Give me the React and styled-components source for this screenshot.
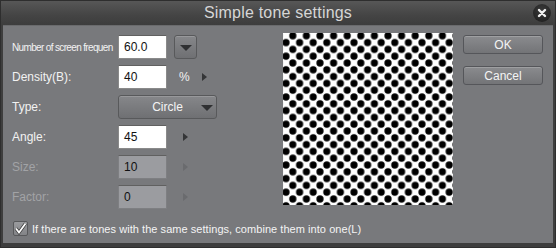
import React from 'react';
import styled, { createGlobalStyle } from 'styled-components';

const GlobalStyle = createGlobalStyle`
  html, body {
    margin: 0;
    padding: 0;
    background: #3c3c3c;
  }
  body {
    font-family: "Liberation Sans", Arial, sans-serif;
  }
`;

const Window = styled.div`
  width: 556px;
  height: 248px;
  box-sizing: border-box;
  display: flex;
  flex-direction: column;
  background: #3e3e3e;
  border: 1px solid #2e2e2e;
  overflow: hidden;
`;

const TitleBar = styled.div`
  height: 24px;
  flex-shrink: 0;
  position: relative;
  display: flex;
  align-items: center;
  justify-content: center;
  background: linear-gradient(#575757, #444444 60%, #3d3d3d);
  color: #d6d6d6;
  font-size: 16px;
  letter-spacing: 0.2px;
`;

const CloseButton = styled.div`
  position: absolute;
  right: 4px;
  top: 3px;
  width: 18px;
  height: 18px;
  border-radius: 50%;
  background: radial-gradient(circle at 50% 35%, #3a3a3a, #1c1c1c);
  display: flex;
  align-items: center;
  justify-content: center;
`;

const Body = styled.div`
  flex: 1;
  margin: 0 2px 4px 2px;
  background: #78797c;
  border-top: 1px solid #6a6b6d;
  padding: 7px 10px 0 9px;
  display: flex;
  flex-direction: column;
`;

const Content = styled.div`
  display: flex;
  align-items: flex-start;
`;

const Form = styled.div`
  width: 271px;
  margin-top: 2px;
  display: flex;
  flex-direction: column;
  gap: 6px;
`;

const Row = styled.div`
  height: 24px;
  display: flex;
  align-items: center;
`;

const Label = styled.div`
  width: 106px;
  flex-shrink: 0;
  font-size: ${p => (p.$small ? '10px' : '12px')};
  letter-spacing: ${p => (p.$small ? '-0.65px' : '0')};
  color: ${p => (p.$disabled ? '#a2a3a6' : '#f2f2f2')};
  white-space: nowrap;
`;

const TextBox = styled.div`
  width: 49px;
  height: 24px;
  box-sizing: border-box;
  padding-left: 5px;
  display: flex;
  align-items: center;
  background: ${p => (p.$disabled ? '#9b9ca0' : '#ffffff')};
  border: 1px solid ${p => (p.$disabled ? '#7e7f82' : '#8a8a8a')};
  border-top-color: #606060;
  color: #111;
  font-size: 12px;
`;

const DropButton = styled.div`
  width: ${p => p.$width}px;
  height: 24px;
  box-sizing: border-box;
  margin-left: ${p => p.$offset || 0}px;
  position: relative;
  display: flex;
  align-items: center;
  justify-content: center;
  background: linear-gradient(#86878a, #6f7073);
  border: 1px solid #58595b;
  border-radius: 3px;
  box-shadow: inset 0 1px 0 rgba(255, 255, 255, 0.15);
  color: #f4f4f4;
  font-size: 12px;
`;

const DownArrow = styled.span`
  position: absolute;
  right: ${p => p.$right}px;
  top: 9px;
  width: 0;
  height: 0;
  border-left: 6px solid transparent;
  border-right: 6px solid transparent;
  border-top: 6px solid #2f3032;
`;

const Unit = styled.span`
  margin-left: 12px;
  width: 11px;
  font-size: 12px;
  color: #f2f2f2;
`;

const SideArrow = styled.span`
  margin-left: ${p => p.$offset}px;
  width: 0;
  height: 0;
  border-top: 4px solid transparent;
  border-bottom: 4px solid transparent;
  border-left: 5px solid ${p => (p.$disabled ? '#6a6b6e' : '#343537')};
`;

const Preview = styled.div`
  width: 170px;
  height: 172px;
  flex-shrink: 0;
  background: #fff;
  line-height: 0;
`;

const Buttons = styled.div`
  margin-left: 10px;
  margin-top: 2px;
  display: flex;
  flex-direction: column;
  gap: 12px;
`;

const Button = styled.div`
  width: 80px;
  height: 19px;
  box-sizing: border-box;
  display: flex;
  align-items: center;
  justify-content: center;
  background: linear-gradient(#8a8b8e, #737477);
  border: 1px solid #55565a;
  border-radius: 3px;
  box-shadow: inset 0 1px 0 rgba(255, 255, 255, 0.18);
  color: #f4f4f4;
  font-size: 12px;
`;

const CheckRow = styled.div`
  margin-top: 12px;
  margin-left: 1px;
  display: flex;
  align-items: center;
  gap: 4px;
  color: #f4f4f4;
  font-size: 11px;
  letter-spacing: 0.05px;
`;

const CheckBox = styled.div`
  width: 15px;
  height: 15px;
  box-sizing: border-box;
  border: 1px solid #58595b;
  border-radius: 2px;
  background: linear-gradient(#9a9b9e, #838487);
  display: flex;
  align-items: center;
  justify-content: center;
`;

const DotPattern = () => (
  <svg width="170" height="172" viewBox="0 0 170 172">
    <defs>
      <pattern id="dots" width="13.6" height="13.6" patternUnits="userSpaceOnUse" x="3" y="-4">
        <circle cx="0" cy="0" r="3.6" fill="#000" />
        <circle cx="13.6" cy="0" r="3.6" fill="#000" />
        <circle cx="0" cy="13.6" r="3.6" fill="#000" />
        <circle cx="13.6" cy="13.6" r="3.6" fill="#000" />
        <circle cx="6.8" cy="6.8" r="3.6" fill="#000" />
      </pattern>
    </defs>
    <rect width="170" height="172" fill="url(#dots)" />
  </svg>
);

export default function App() {
  return (
    <>
      <GlobalStyle />
      <Window>
        <TitleBar>
          Simple tone settings
          <CloseButton>
            <svg width="10" height="10" viewBox="0 0 10 10">
              <path d="M2 2 L8 8 M8 2 L2 8" stroke="#f2f2f2" strokeWidth="2.4" strokeLinecap="round" />
            </svg>
          </CloseButton>
        </TitleBar>
        <Body>
          <Content>
            <Form>
              <Row>
                <Label $small>Number of screen frequen</Label>
                <TextBox>60.0</TextBox>
                <DropButton $width={23} $offset={7}>
                  <DownArrow $right={4} />
                </DropButton>
              </Row>
              <Row>
                <Label>Density(B):</Label>
                <TextBox>40</TextBox>
                <Unit>%</Unit>
                <SideArrow $offset={12} />
              </Row>
              <Row>
                <Label>Type:</Label>
                <DropButton $width={99}>
                  Circle
                  <DownArrow $right={3} />
                </DropButton>
              </Row>
              <Row>
                <Label>Angle:</Label>
                <TextBox>45</TextBox>
                <SideArrow $offset={16} />
              </Row>
              <Row>
                <Label $disabled>Size:</Label>
                <TextBox $disabled>10</TextBox>
                <SideArrow $offset={16} $disabled />
              </Row>
              <Row>
                <Label $disabled>Factor:</Label>
                <TextBox $disabled>0</TextBox>
                <SideArrow $offset={16} $disabled />
              </Row>
            </Form>
            <Preview>
              <DotPattern />
            </Preview>
            <Buttons>
              <Button>OK</Button>
              <Button>Cancel</Button>
            </Buttons>
          </Content>
          <CheckRow>
            <CheckBox>
              <svg width="13" height="13" viewBox="0 0 13 13">
                <path d="M2 6.5 L5 10.5 L11.5 1.5" fill="none" stroke="#3a3a3a" strokeWidth="3.2" />
                <path d="M2 6.5 L5 10.5 L11.5 1.5" fill="none" stroke="#ffffff" strokeWidth="1.8" />
              </svg>
            </CheckBox>
            If there are tones with the same settings, combine them into one(L)
          </CheckRow>
        </Body>
      </Window>
    </>
  );
}
